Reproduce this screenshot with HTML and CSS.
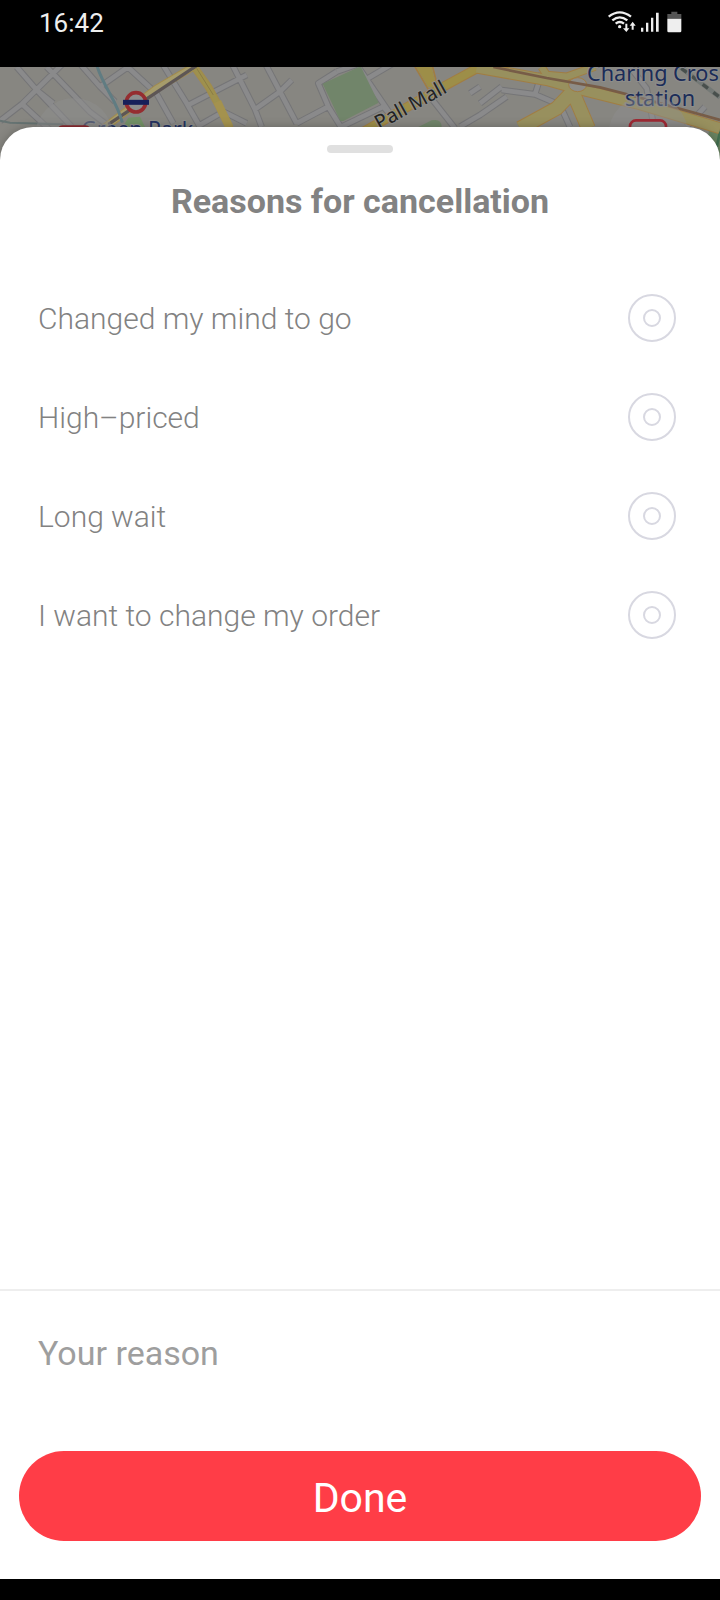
FILE: index.html
```html
<!DOCTYPE html>
<html lang="en">
<head>
<meta charset="utf-8">
<meta name="viewport" content="width=device-width, initial-scale=1">
<title>Reasons for cancellation</title>
<link rel="stylesheet" href="styles.css">
</head>
<body>
<header class="status">
  <time class="status-time">16:42</time>
  <svg class="status-icons" viewBox="0 0 220 66" aria-hidden="true">
    <g fill="none" stroke="#eee" stroke-width="7">
      <path d="M1 17Q34-9 68 17"/>
      <path d="M12 28Q34 10 57 28"/>
      <path d="M22 38Q34 28 47 38"/>
    </g>
    <circle cx="34" cy="47" r="5" fill="#eee"/>
    <g fill="#eee">
      <path d="M51 38h6v14h6l-9 11-10-11h7z"/>
      <path d="M70 56h6V44h6l-9-12-9 12h6z"/>
      <path d="M98 50h7v12h-7zM113 35h7v27h-7zM128 20h7v42h-7zM143 5h8v57h-8z"/>
    </g>
    <path d="M189 2h18v7h12v14h-42V9h12z" fill="#555"/>
    <path d="M177 23h42v37q0 4-4 4h-34q-4 0-4-4z" fill="#eee"/>
  </svg>
</header>
<main class="screen">
  <svg class="map" viewBox="0 21 2160 279" preserveAspectRatio="xMidYMin slice" role="img" aria-label="Map">
    <defs>
      <path id="streets" d="M0 183L66 132L240-40M66 132L150 210M50 21L112 92L215 200M140 21L270 156L330 201M112 92L160 130M230 0L300 80L345 125M300 80L400 10M360 0L470 101L520 190M480 0L560 130L600 201M565 135L740 45M600 195L670 155L740 190M690 0L765 148L785 201M765 148L840 95L875 60M790 0L890 190M890 190L985 140L1025 205M985 140L955 70L1010 35M1010 35L1110 0M1075 21L1180 175M1025 200L1150 140L1180 175M1095 60L1180 10M1290 110L1365 205M1380 200L1440 165L1520 110M1505 90L1605 103L1680 135L1710 201M1605 103L1625 40M1440 130L1505 80M1410 100L1440 80M1890 21L1940 85L1960 190M2060 200L2115 140"/>
    </defs>
    <rect y="21" width="2160" height="279" fill="#878681"/>
    <g fill="none" stroke-linejoin="round">
      <use href="#streets" stroke="#757577" stroke-width="20"/>
      <use href="#streets" stroke="#8a8a8b" stroke-width="14"/>
    </g>
    <path d="M0 182L30 188L190 193" fill="none" stroke="#667372" stroke-width="6"/>
    <path d="M968 71L1077 21H1083L1136 128L1030 183L1021 183Z" fill="#71856a"/>
    <path d="M1255 201L1295 181Q1325 175 1325 201Z" fill="#71856a"/>
    <path d="M368 201L385 173L420 170L435 201Z" fill="#739166"/>
    <path d="M2115 300L2130 188L2160 205V300Z" fill="#698361"/>
    <path d="M2160 215L2148 270" stroke="#426f50" stroke-width="8"/>
    <g fill="none" stroke="#a28b4c" stroke-width="23">
      <path d="M310 205L470 85L590 15"/>
      <path d="M575 10L625 80L655 135L690 205"/>
    </g>
    <g fill="none" stroke="#a69c6b" stroke-width="17">
      <path d="M310 205L470 85L590 15"/>
      <path d="M575 10L625 80L655 135L690 205" stroke="#9e914e"/>
      <path d="M652 125L688 201" stroke-width="24" stroke="#a4924e"/>
    </g>
    <path d="M590 25L640 105" stroke="#8b7c45" stroke-width="3"/>
    <path d="M325 193L590 17" stroke="#5d5655" stroke-width="10"/>
    <path d="M290 15C312 85 350 120 367 188" fill="none" stroke="#607c82" stroke-width="9"/>
    <g fill="none" stroke="#a17d43">
      <path d="M1090 215L1330 80L1450 15" stroke-width="29"/>
      <path d="M1242 15L1285 88H1315L1298 21" stroke-width="5"/>
      <path d="M1430 23L1640 60L1730 85L1910 130L2160 205" stroke-width="36"/>
      <path d="M1560 205L1670 145L1718 95L1765 205" stroke-width="45"/>
      <path d="M1625 21L1640 45L1700 50L1785 20" stroke-width="25"/>
    </g>
    <g fill="none" stroke="#98905e">
      <path d="M1090 215L1330 80L1450 15" stroke="#9d8e48" stroke-width="23"/>
      <path d="M1245 15L1285 82H1310L1295 21Z" fill="#9d8e48" stroke="none"/>
      <path d="M1430 23L1640 60L1730 85L1910 130L2160 205" stroke-width="30"/>
      <path d="M1560 205L1670 145L1718 95L1765 205" stroke-width="39"/>
      <path d="M1625 21L1640 45L1700 50L1785 20" stroke-width="19"/>
    </g>
    <ellipse cx="1733" cy="74" rx="27" ry="21" fill="#8e8d88" stroke="#a17d43" stroke-width="3"/>
    <path d="M1480 21L1640 54L1800 82L1910 110L2160 180" fill="none" stroke="#775c47" stroke-width="8"/>
    <path d="M2040 21L2160 112" stroke="#747976" stroke-width="14"/>
    <path d="M2044 25L2160 112" stroke="#484f4c" stroke-width="10" stroke-dasharray="20 20"/>
    <g class="map-label">
      <text x="244" y="232" font-size="64" fill="#243260" stroke="#8d8d8b" stroke-width="6">Green Park</text>
      <text x="1761" y="63" font-size="65" fill="#1b2c58" stroke="#8d8d8b" stroke-width="6">Charing Cros</text>
      <text x="1980" y="139" font-size="65" text-anchor="middle" fill="#1b2c58" stroke="#8d8d8b" stroke-width="6">station</text>
      <text transform="translate(1138 210) rotate(-29)" font-size="60" fill="#222" stroke="#8d8d8b" stroke-width="6">Pall Mall</text>
    </g>
    <circle cx="222" cy="232" r="118" fill="#8e8e8e" fill-opacity=".5"/>
    <circle cx="1945" cy="225" r="120" fill="#8e8e8e" fill-opacity=".45"/>
    <rect x="173" y="200" width="98" height="90" rx="15" fill="none" stroke="#8c2a30" stroke-width="8"/>
    <rect x="1890" y="181" width="108" height="90" rx="18" fill="#8b8989" stroke="#9e2934" stroke-width="8"/>
    <circle cx="408" cy="127" r="29" fill="#8d8d8d" stroke="#952d30" stroke-width="11"/>
    <path d="M369 127H447" stroke="#17205a" stroke-width="15"/>
  </svg>
  <form class="sheet">
    <span class="handle"></span>
    <h1 class="title">Reasons for cancellation</h1>
    <div class="options" role="radiogroup" aria-label="Reasons for cancellation">
      <label class="option"><span class="option-text">Changed my mind to go</span><input class="radio" type="radio" name="reason"></label>
      <label class="option"><span class="option-text">High–priced</span><input class="radio" type="radio" name="reason"></label>
      <label class="option"><span class="option-text">Long wait</span><input class="radio" type="radio" name="reason"></label>
      <label class="option"><span class="option-text">I want to change my order</span><input class="radio" type="radio" name="reason"></label>
    </div>
    <div class="footer">
      <input class="reason" type="text" placeholder="Your reason" aria-label="Your reason">
      <button class="done" type="button">Done</button>
    </div>
  </form>
</main>
<div class="nav"></div>
</body>
</html>
```
FILE: styles.css
```css
* {
  box-sizing: border-box;
}

body {
  display: flex;
  flex-direction: column;
  min-height: 100vh;
  margin: 0;
  background: #000;
  color: #828282;
  font-family: Roboto, sans-serif;
}

.status {
  display: flex;
  justify-content: space-between;
  align-items: flex-start;
  height: 67px;
  padding: 7px 38px 0 39px;
  color: #eee;
}

.status-time {
  font-size: 26px;
  line-height: 32px;
}

.status-icons {
  width: 74px;
  height: 22px;
  margin-top: 4px;
}

.screen {
  display: grid;
  flex: 1;
}

.map {
  grid-area: 1 / 1;
  width: 100%;
  height: 93px;
}

.map-label {
  font-family: "Noto Sans", sans-serif;
  paint-order: stroke;
}

.sheet {
  z-index: 1;
  grid-area: 1 / 1;
  display: flex;
  flex-direction: column;
  margin-top: 60px;
  padding-top: 18px;
  border-radius: 33px 33px 0 0;
  background: #fff;
  box-shadow: 0 0 10px rgba(0, 0, 0, 0.25);
}

.handle {
  align-self: center;
  width: 66px;
  height: 8px;
  border-radius: 4px;
  background: #e0e0e0;
}

.title {
  margin: 28px 0 0;
  font-size: 34px;
  font-weight: 700;
  line-height: 40px;
  text-align: center;
}

.options {
  margin-top: 47px;
}

.option {
  display: flex;
  justify-content: space-between;
  align-items: center;
  height: 99px;
  padding: 0 44px 0 38px;
  font-size: 30px;
  font-weight: 300;
  line-height: 36px;
}

.option-text {
  padding-top: 2px;
}

.radio {
  display: grid;
  place-items: center;
  width: 48px;
  height: 48px;
  margin: 0;
  appearance: none;
  border: 2px solid #d8d8e1;
  border-radius: 50%;
}

.radio::before {
  content: "";
  box-sizing: border-box;
  width: 18px;
  height: 18px;
  border: 2px solid #d8d8e1;
  border-radius: 50%;
}

.radio:checked::before {
  border-color: #ff3d47;
  background: #ff3d47;
}

.footer {
  display: flex;
  flex-direction: column;
  margin-top: auto;
  padding: 0 19px 38px;
  border-top: 2px solid #eee;
}

.reason {
  height: 124px;
  margin-bottom: 36px;
  padding: 0 19px;
  border: 0;
  outline: 0;
  background: transparent;
  color: #828282;
  font: 400 34px/40px Roboto, sans-serif;
}

.reason::placeholder {
  color: #9e9e9e;
}

.done {
  height: 90px;
  padding: 4px 0 0;
  border: 0;
  border-radius: 45px;
  background: #ff3d47;
  color: #fff;
  font: 400 41px/50px Roboto, sans-serif;
}

.nav {
  height: 21px;
}
```
